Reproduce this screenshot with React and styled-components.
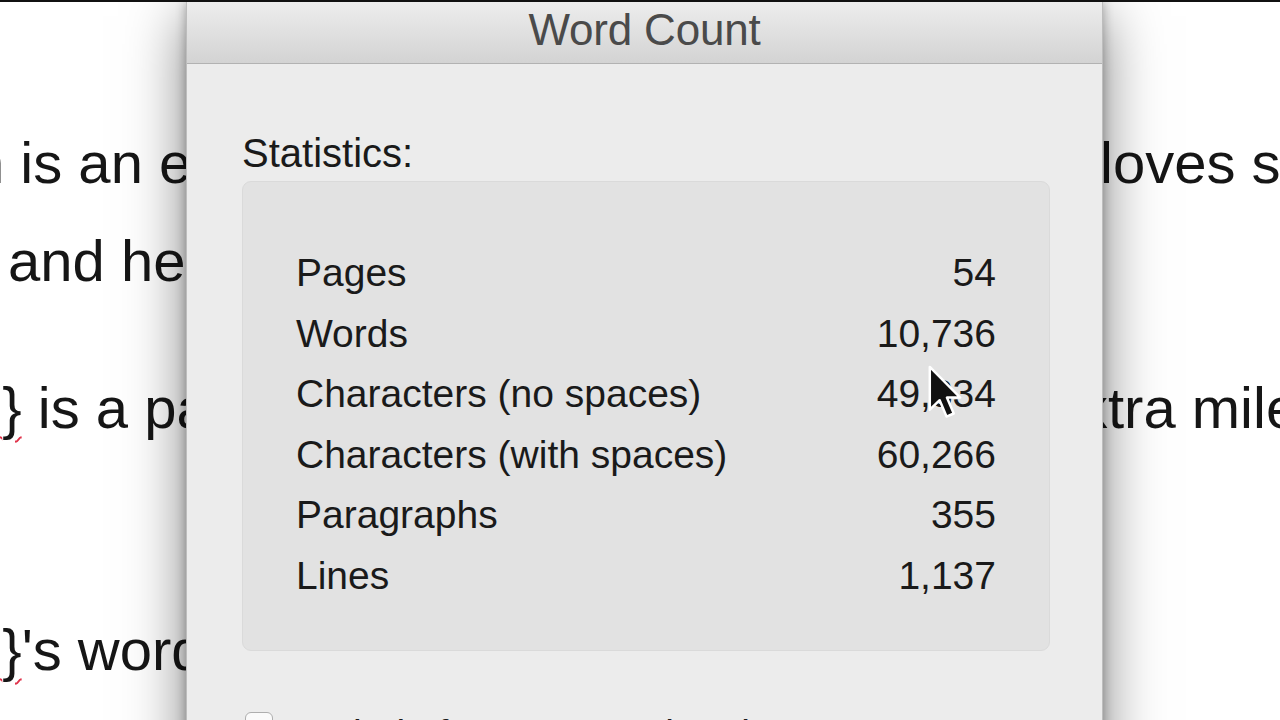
import React from "react";
import styled, { createGlobalStyle } from "styled-components";

const stats = [
	{ label: "Pages", value: "54" },
	{ label: "Words", value: "10,736" },
	{ label: "Characters (no spaces)", value: "49,334" },
	{ label: "Characters (with spaces)", value: "60,266" },
	{ label: "Paragraphs", value: "355" },
	{ label: "Lines", value: "1,137" },
];

// document text peeking out on both sides of the sheet
const docLines = [
	{ left: "n is an expert writer", shift: -28, right: "loves stories", indent: -3, gap: 0 },
	{ left: "and he writes", shift: 8, right: "", indent: 0, gap: 40 },
	{ left: "e} is a passionate", shift: -30, right: "xtra miles", indent: -24, gap: 89, mark: true },
	{ left: "e}'s words", shift: -30, right: "", indent: 0, gap: 184, mark: true },
];

const App = () => {
	return (
		<Page>
			<GlobalStyle />
			<Document>
				{docLines.map((line, i) => (
					<DocLine key={i} $gap={line.gap}>
						<LeftText $shift={line.shift}>
							{line.mark ? (
								<>
									<Marked>e{"}"}</Marked>
									{line.left.slice(2)}
								</>
							) : (
								line.left
							)}
						</LeftText>
						<RightText $indent={line.indent}>{line.right}</RightText>
					</DocLine>
				))}
			</Document>

			<Dialog>
				<TitleBar>Word Count</TitleBar>
				<DialogBody>
					<SectionLabel>Statistics:</SectionLabel>
					<GroupBox>
						{stats.map((s) => (
							<StatRow key={s.label}>
								<StatLabel>{s.label}</StatLabel>
								<StatValue>{s.value}</StatValue>
							</StatRow>
						))}
					</GroupBox>
					<CheckRow>
						<CheckBox />
						<CheckText>Include footnotes and endnotes</CheckText>
					</CheckRow>
				</DialogBody>
			</Dialog>

			<Cursor viewBox="0 0 20 32" width="38" height="61">
				<path
					d="M2 1.5 L2 24 L7.2 19 L10.8 27.6 L14.6 26 L11 17.6 L18 17.6 Z"
					fill="#111"
					stroke="#fff"
					strokeWidth="1.3"
					strokeLinejoin="round"
				/>
			</Cursor>
		</Page>
	);
};

const GlobalStyle = createGlobalStyle`
	body {
		margin: 0;
		background: #ffffff;
		overflow: hidden;
		font-family: "Liberation Sans", Arial, sans-serif;
	}
`;

const Page = styled.div`
	position: relative;
	width: 1280px;
	height: 720px;
	overflow: hidden;
	background: #ffffff;
	border-top: 2px solid #111;
	box-sizing: border-box;
`;

const Document = styled.div`
	padding-top: 132px;
	font-family: "Liberation Sans", Arial, sans-serif;
	color: #161616;
`;

const DocLine = styled.div`
	display: grid;
	grid-template-columns: 1103px 1fr;
	margin-top: ${(p) => p.$gap}px;
	font-size: 58px;
	line-height: 58px;
	white-space: nowrap;
`;

const LeftText = styled.div`
	margin-left: ${(p) => p.$shift}px;
`;

const RightText = styled.div`
	overflow: hidden;
	text-indent: ${(p) => p.$indent}px;
`;

const Marked = styled.span`
	text-decoration: underline wavy #e0324a;
	text-decoration-thickness: 2px;
	text-underline-offset: 8px;
`;

const Dialog = styled.div`
	position: absolute;
	top: 0;
	left: 186px;
	width: 917px;
	height: 820px;
	background: #ececec;
	border-left: 1px solid #bdbdbd;
	border-right: 1px solid #bdbdbd;
	box-sizing: border-box;
	box-shadow: 0 14px 56px rgba(0, 0, 0, 0.5), 0 0 10px rgba(0, 0, 0, 0.3);
	display: flex;
	flex-direction: column;
`;

const TitleBar = styled.div`
	height: 62px;
	display: flex;
	align-items: center;
	justify-content: center;
	padding-bottom: 5px;
	box-sizing: border-box;
	background: linear-gradient(#ededed, #d3d3d3);
	border-bottom: 1px solid #b2b2b2;
	font-size: 44px;
	color: #4a4a4a;
	letter-spacing: -0.2px;
`;

const DialogBody = styled.div`
	padding: 65px 52px 0 55px;
	display: flex;
	flex-direction: column;
`;

const SectionLabel = styled.div`
	font-size: 40px;
	line-height: 48px;
	color: #1a1a1a;
	margin-bottom: 4px;
`;

const GroupBox = styled.div`
	height: 470px;
	box-sizing: border-box;
	padding: 61px 53px 0 53px;
	background: #e2e2e2;
	border: 1px solid #dadada;
	border-radius: 9px;
`;

const StatRow = styled.div`
	display: flex;
	justify-content: space-between;
	font-size: 39px;
	line-height: 60.5px;
	color: #1a1a1a;
`;

const StatLabel = styled.span``;

const StatValue = styled.span`
	text-align: right;
`;

const CheckRow = styled.div`
	display: flex;
	align-items: flex-start;
	gap: 28px;
	margin-top: 61px;
	padding-left: 3px;
`;

const CheckBox = styled.div`
	width: 28px;
	height: 28px;
	border: 1px solid #aeaeae;
	border-radius: 6px;
	background: #fafafa;
	box-sizing: border-box;
`;

const CheckText = styled.span`
	font-size: 39px;
	line-height: 40px;
	margin-top: 2px;
	color: #1a1a1a;
`;

const Cursor = styled.svg`
	position: absolute;
	left: 926px;
	top: 362px;
`;

export default App;
